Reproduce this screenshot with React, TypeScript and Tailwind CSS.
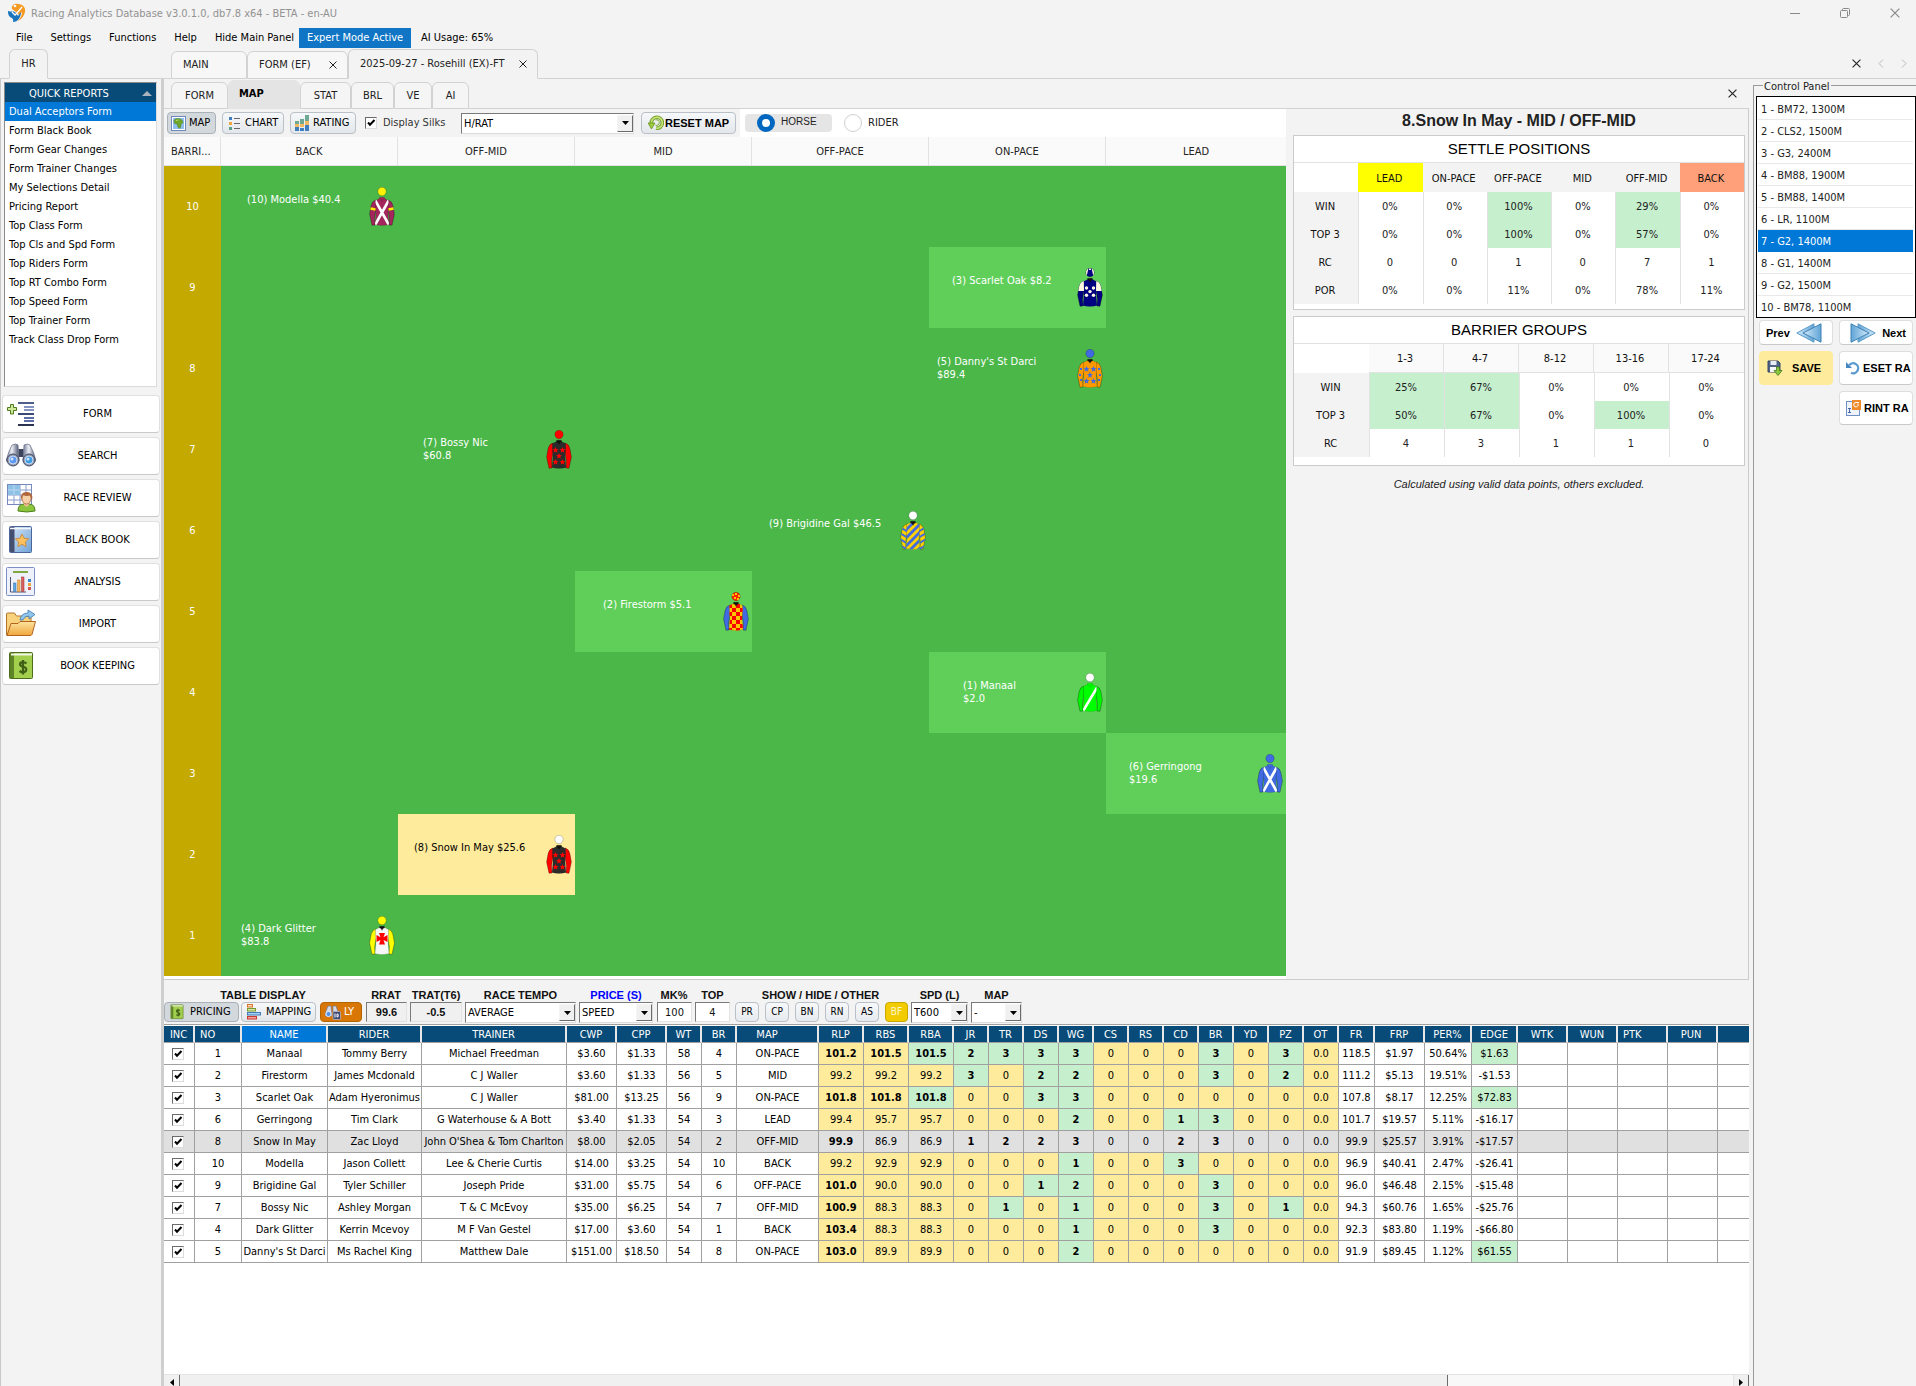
import React from "react";

/* ---------- Icons ---------- */

const LogoIcon = () => (
  <svg width="18" height="20" viewBox="0 0 18 20">
    <path d="M4 6C3 2 7 0 10 1c5 0 8 4 7 8-1 4-3 7-7 9 3-4 4-6 4-9l-3 3-3-3z" fill="#f59a23" />
    <path d="M0 8c3 1 5 0 7 1l3 4 3-4c0 5-3 10-8 10 1-3-1-4-3-5C0 12 0 10 0 8z" fill="#1b75bc" />
    <path d="M4 9l3 3 2-2 5-6" fill="none" stroke="#fff" strokeWidth="1.3" />
    <circle cx="7" cy="3" r="1.3" fill="#fff" />
  </svg>
);

const Cross = ({ size = 8, color = "#222" }: { size?: number; color?: string }) => (
  <svg width={size} height={size} viewBox="0 0 8 8">
    <path d="M.5.5l7 7M7.500.5l-7 7" stroke={color} strokeWidth="1" fill="none" />
  </svg>
);

const FormIcon = () => (
  <svg width="30" height="30" viewBox="0 0 30 30">
    <path d="M12 4h16" stroke="#4d5f8c" strokeWidth="2" />
    <path d="M18 8h10M18 11h10" stroke="#8495c2" strokeWidth="2" />
    <path d="M12 15h16" stroke="#3b4a75" strokeWidth="2" />
    <path d="M18 19h10M18 22h10" stroke="#5a6da6" strokeWidth="2" />
    <path d="M12 26h16" stroke="#2a3350" strokeWidth="2" />
    <path d="M4.500 5.500h3v3h3v3h-3v3.500h-3v-3.500h-3v-3h3z" fill="#cfe89a" stroke="#4e7a1f" />
  </svg>
);

const SearchIcon = () => (
  <svg width="30" height="30" viewBox="0 0 30 30">
    <defs>
      <linearGradient id="bino" x1="0" x2="1">
        <stop offset="0" stopColor="#6e7791" />
        <stop offset=".45" stopColor="#eef0f6" />
        <stop offset="1" stopColor="#4b536d" />
      </linearGradient>
    </defs>
    <rect x="12.500" y="8" width="5" height="8" fill="#3b435c" />
    <path d="M6 4q4-2 6 0l1 16H0Q3 9 6 4z" fill="url(#bino)" stroke="#646c86" strokeWidth=".7" />
    <path d="M18 4q4-2 6 0 4 7 6 16H17z" fill="url(#bino)" stroke="#646c86" strokeWidth=".7" />
    <circle cx="7" cy="19" r="6" fill="#8d95ad" stroke="#444c66" />
    <circle cx="7" cy="19" r="4" fill="#5b97ee" stroke="#e3ecfb" strokeWidth=".8" />
    <circle cx="23" cy="19" r="6" fill="#8d95ad" stroke="#444c66" />
    <circle cx="23" cy="19" r="4" fill="#3f9de0" stroke="#e3ecfb" strokeWidth=".8" />
    <circle cx="6" cy="18" r="1.500" fill="#cfe3ff" />
    <circle cx="22" cy="18" r="1.500" fill="#cfe3ff" />
  </svg>
);

const ReviewIcon = () => (
  <svg width="30" height="30" viewBox="0 0 30 30">
    <rect x="1.500" y="1.500" width="24" height="20" fill="#fff" stroke="#7589bd" />
    <path d="M8 2v19M14 2v19M20 2v19M2 7h23M2 12h23M2 17h23" stroke="#8b9ccb" />
    <rect x="2" y="2" width="12" height="10" fill="#8fc1e6" />
    <path d="M8 2v10M2 7h12" stroke="#b9d9f0" />
    <path d="M12 28q0-7 6-7h5q6 0 6 7-8 2-17 0z" fill="#8cc63f" stroke="#4e7f1c" />
    <path d="M18 19h5v3l-2.500 2-2.500-2z" fill="#eebf93" />
    <ellipse cx="20.500" cy="15.500" rx="4.500" ry="5.500" fill="#f5d0a8" stroke="#a8653a" strokeWidth=".8" />
    <path d="M15 17q-1-8 5.500-8 7 0 5.500 8l-2-4.500q-4 1-7-.5z" fill="#b0643a" />
  </svg>
);

const BlackBookIcon = () => (
  <svg width="30" height="30" viewBox="0 0 30 30">
    <defs>
      <linearGradient id="bb" x1="0" y1="0" x2="1" y2="1">
        <stop offset="0" stopColor="#d9e7f7" />
        <stop offset="1" stopColor="#6fa3d8" />
      </linearGradient>
    </defs>
    <rect x="3.500" y="1.500" width="22" height="26" rx="1" fill="url(#bb)" stroke="#4c6699" />
    <rect x="4" y="2" width="4.500" height="25" fill="#454f70" />
    <path d="M4 3.500h21" stroke="#f2f6fc" strokeWidth="1.500" />
    <path d="M16 9l2 4.200 4.700.6-3.400 3.200.9 4.600-4.200-2.300-4.200 2.300.9-4.600-3.400-3.200 4.700-.6z" fill="#fcc05f" stroke="#c98432" strokeWidth=".8" />
  </svg>
);

const AnalysisIcon = () => (
  <svg width="30" height="30" viewBox="0 0 30 30">
    <rect x="0.500" y="0.500" width="28" height="28" rx="1" fill="#eef1f9" stroke="#7c8fc4" />
    <path d="M7 5h15" stroke="#7fa93f" strokeWidth="2" />
    <path d="M4.500 10v15H20" stroke="#4a5675" fill="none" />
    <rect x="7.500" y="16" width="2.500" height="8.500" fill="#5fa7e0" stroke="#2f6aa8" strokeWidth=".5" />
    <rect x="11.500" y="13" width="2.500" height="11.500" fill="#f4b661" stroke="#c47f22" strokeWidth=".5" />
    <rect x="15.500" y="10" width="2.500" height="14.500" fill="#d9605c" stroke="#9c2f2c" strokeWidth=".5" />
    <rect x="22" y="12" width="3" height="3" fill="#3d85c6" />
    <rect x="22" y="16" width="3" height="3" fill="#f0a23c" />
    <rect x="22" y="20" width="3" height="3" fill="#cf5450" />
  </svg>
);

const ImportIcon = () => (
  <svg width="30" height="30" viewBox="0 0 30 30">
    <defs>
      <linearGradient id="fold" x1="0" y1="0" x2="0" y2="1">
        <stop offset="0" stopColor="#fde3a0" />
        <stop offset="1" stopColor="#f0a63c" />
      </linearGradient>
    </defs>
    <path d="M.5 26V5q0-1 1-1h7l2 3h13q1.500 0 1.500 1.500V13z" fill="#f8d27c" stroke="#b3742a" />
    <path d="M1 26.500L5 14.500h7l2-2h15.500L26 25.500q-.5 1-2 1z" fill="url(#fold)" stroke="#b3641c" />
    <path d="M14 11q1-7 8-7V1l7 4.500-6 4.500V7q-5 0-6 4z" fill="#8fc6ee" stroke="#3f78ae" strokeWidth=".8" />
  </svg>
);

const MoneyBookIcon = ({ size = 30 }: { size?: number }) => (
  <svg width={size} height={size} viewBox="0 0 30 30">
    <rect x="3.500" y="1.500" width="23" height="26" rx="1" fill="#a3cf4e" stroke="#4c6b1b" />
    <rect x="4" y="2" width="4" height="25" fill="#5f8427" />
    <path d="M5 3.500h21" stroke="#eef5e0" strokeWidth="2" />
    <path d="M20.500 12.500q-3-2.500-6-.8-1.500 2.800 1.800 3.800 5 1 3.800 4.200-2.600 3-6.600.3M17 9v14.500" fill="none" stroke="#3f5f16" strokeWidth="2.200" />
  </svg>
);

const MapIcon = () => (
  <svg width="15" height="15" viewBox="0 0 15 15">
    <rect x=".5" y=".5" width="14" height="14" fill="#fff" stroke="#6f89bd" />
    <rect x="2" y="2" width="11" height="11" fill="#8fbfee" />
    <path d="M3 4.500q1-2 3.500-2T11 4l1 2.500-2 2-.5 3-1.500 1-1.500-2.500V8H4.500q-2-1.500-1.500-3.500z" fill="#6fa62c" stroke="#4c7d1c" strokeWidth=".5" />
    <path d="M5 4.500l2.500-.5" stroke="#b5dd6a" />
  </svg>
);

const ListIcon = () => (
  <svg width="12" height="13" viewBox="0 0 12 13">
    <rect x="0" y="0" width="3" height="3" fill="#3f7fbf" />
    <rect x="0" y="5" width="3" height="3" fill="#f0a83c" />
    <rect x="0" y="10" width="3" height="3" fill="#5a9f87" />
    <path d="M5 1.500h6M5 6.500h6M5 11.500h6" stroke="#666" />
  </svg>
);

const RatingIcon = () => (
  <svg width="15" height="16" viewBox="0 0 15 16">
    <path d="M0 12h4v4H0zM5 13h4v3H5zM10 10h4v6h-4z" fill="#3f7fbf" />
    <path d="M0 9h4v3H0zM5 9h4v3H5zM10 6h4v4h-4z" fill="#f3b95f" />
    <path d="M0 6h4v3H0zM5 4h4v5H5zM10 0h4v6h-4z" fill="#6fa893" />
  </svg>
);

const ResetMapIcon = () => (
  <svg width="16" height="16" viewBox="0 0 16 16">
    <path d="M3.500 9A5.500 5.500 0 1 1 8 13.200" fill="none" stroke="#6f9c22" strokeWidth="3.600" />
    <path d="M3.500 9A5.500 5.500 0 1 1 8 13.200" fill="none" stroke="#c3e27a" strokeWidth="1.800" />
    <path d="M7.500 5a2.800 2.800 0 1 1 0 5.200" fill="none" stroke="#77a52b" />
    <path d="M0 8h7l-3.500 6z" fill="#9ecb3e" stroke="#5f8a1b" strokeWidth=".7" />
  </svg>
);

const MappingIcon = () => (
  <svg width="14" height="16" viewBox="0 0 14 16">
    <rect x=".5" y=".5" width="5" height="2.500" fill="#fbe2b8" stroke="#d9742c" />
    <rect x=".5" y="4.500" width="8" height="2.500" fill="#d5e8a5" stroke="#7a9a2e" />
    <rect x=".5" y="8.500" width="13" height="2.500" fill="#a7d0f2" stroke="#3f7db8" />
    <rect x=".5" y="12.500" width="9" height="2.500" fill="#f3a39c" stroke="#c8392f" />
  </svg>
);

const BinoIdIcon = () => (
  <svg width="16" height="15" viewBox="0 0 16 15">
    <path d="M3 1h3l1 10H0q1-6 3-10zM8 1h3l2 6H8z" fill="#d5d9e6" stroke="#69728f" strokeWidth=".6" />
    <circle cx="3.500" cy="9" r="2.600" fill="#4d95e6" stroke="#eef" />
    <rect x="8" y="6.500" width="7.500" height="8" rx="1" fill="#3c4a75" stroke="#c9cfe2" strokeWidth=".6" />
    <path d="M10 8.500v4M12 9v3h.8q1.200-1.500 0-3z" stroke="#fff" fill="none" />
  </svg>
);

const DoubleArrow = ({ flip = false }: { flip?: boolean }) => (
  <svg width="26" height="20" viewBox="0 0 26 20" className={`shrink-0 ${flip ? "rotate-180" : ""}`}>
    <defs>
      <linearGradient id="da" x1="0" y1="0" x2="1" y2="0">
        <stop offset="0" stopColor="#d3ebfa" />
        <stop offset="1" stopColor="#5fa4d6" />
      </linearGradient>
    </defs>
    <path d="M.8 10L18 .8v18.400z" fill="url(#da)" stroke="#5b9ac8" />
    <path d="M7 10L25 .8v18.400z" fill="url(#da)" stroke="#3f80b3" />
  </svg>
);

const SaveIcon = () => (
  <svg width="16" height="16" viewBox="0 0 16 16">
    <path d="M1 1h10l2 2v9H1z" fill="#4f6185" stroke="#37476b" />
    <rect x="3.500" y="1" width="6" height="4" fill="#e6ebf5" />
    <rect x="3" y="7" width="8" height="5" fill="#f4f6fa" />
    <path d="M9.500 7h3v3.500H15L11 15.500 7 10.500h2.500z" fill="#8cc63f" stroke="#447a1c" strokeWidth=".8" />
  </svg>
);

const UndoIcon = () => (
  <svg width="14" height="14" viewBox="0 0 14 14">
    <path d="M3.200 4.200A5 5 0 1 1 5 11.800" fill="none" stroke="#5b9ad0" strokeWidth="2.300" />
    <path d="M0 1v6h6z" fill="#4886bf" />
  </svg>
);

const PrintIcon = () => (
  <svg width="15" height="16" viewBox="0 0 15 16">
    <rect x=".5" y="1.500" width="13" height="14" fill="#eef3fb" stroke="#6f8fc7" />
    <rect x="6" y="0" width="9" height="10" fill="#ef8a2b" />
    <path d="M13 2.500h-3a2.200 2.200 0 1 0 1.800 1" fill="none" stroke="#fff" />
    <path d="M2 8.500h3M2 12.500h3M3.500 8.500v4" stroke="#4668a8" fill="none" />
  </svg>
);

/* ---------- Jockey silks ---------- */

const TORSO = "M6.500 13.500L10.500 11.500h5L19.500 13.500 19.500 20 19 27 20 37.500q-7 2-14 0L7 27 6.500 20z";
const SLEEVE_L = "M6.800 13Q3 14 2 19L.6 27 3 38.300 6 38 5.600 31 7 22z";
const SLEEVE_R = "M19.200 13Q23 14 24 19l1.400 8L23 38.300 20 38l.4-7L19 22z";
const STAR = "M0-3L.9-.9 3-.8 1.300.6 1.900 2.800 0 1.500-1.900 2.800-1.300.6-3-.8-.9-.9z";
const STAR_SPOTS = [[9.500, 20], [16.500, 20], [13, 26], [9.500, 32], [16.500, 32]];

type SilkDef = { cap: string; body: string; sleeve: string; art?: string; mark?: string };

const Silk = ({ id, def }: { id: string; def: SilkDef }) => {
  const { cap, body, sleeve, art, mark } = def;
  return (
    <svg width="26" height="39" viewBox="0 0 26 39" className="shrink-0">
      <defs>
        <clipPath id={`t${id}`}><path d={TORSO} /></clipPath>
        <clipPath id={`l${id}`}><path d={SLEEVE_L} /></clipPath>
        <clipPath id={`r${id}`}><path d={SLEEVE_R} /></clipPath>
        <clipPath id={`c${id}`}><circle cx="13" cy="4.500" r="4" /></clipPath>
      </defs>
      <path d={SLEEVE_L} fill={sleeve} stroke="#0006" strokeWidth=".7" />
      <path d={SLEEVE_R} fill={sleeve} stroke="#0006" strokeWidth=".7" />
      <path d={TORSO} fill={body} stroke="#0003" strokeWidth=".5" />
      <circle cx="13" cy="4.500" r="4.200" fill={cap} stroke="#0005" strokeWidth=".6" />
      {art === "cross" && (
        <g clipPath={`url(#t${id})`}>
          <path d="M6 13L20 38M20 13L6 38" stroke={mark} strokeWidth="2.600" />
        </g>
      )}
      {art === "sash" && (
        <g clipPath={`url(#t${id})`}>
          <path d="M21 13L6 38" stroke={mark} strokeWidth="2.600" />
        </g>
      )}
      {art === "stars" &&
        STAR_SPOTS.map(([x, y], i) => <path key={i} d={STAR} fill={mark} transform={`translate(${x} ${y})`} />)}
      {art === "spots" && STAR_SPOTS.map(([x, y], i) => (
        <circle key={i} cx={x} cy={20 + (y - 20) * 0.6} r="1.700" fill={mark} />
      ))}
      {art === "maltese" && (
        <path d="M10 17h6l-1.500 4.200L18.500 19v7L14.500 24l1.500 4.500h-6L11.500 24l-4 2v-7l4 2.200z" fill={mark} />
      )}
      {art === "check" && (
        <g>
          <g clipPath={`url(#t${id})`}>
            {Array.from({ length: 28 }, (_, i) => {
              const r = Math.floor(i / 4);
              const c = i % 4;
              return (r + c) % 2 === 0 ? (
                <rect key={i} x={5 + c * 4} y={12 + r * 4} width="4" height="4" fill={mark} />
              ) : null;
            })}
          </g>
          <g clipPath={`url(#c${id})`} fill="#ffc600">
            <path d="M9 2h2v2H9zM12 1h2v2h-2zM15 3h2v2h-2zM11 5h2v2h-2zM14 6h2v2h-2z" />
          </g>
        </g>
      )}
      {art === "stripes" && (
        <g stroke={mark} strokeWidth="2.800" fill="none">
          <path clipPath={`url(#t${id})`} d="M2 23L20 5M2 31L24 9M2 39L26 15M8 41L28 21M16 41L28 29" />
          <path clipPath={`url(#l${id})`} strokeWidth="2" d="M0 16l8 5M0 22l8 5M0 28l8 5M0 34l8 5" />
          <path clipPath={`url(#r${id})`} strokeWidth="2" d="M26 16l-8 5M26 22l-8 5M26 28l-8 5M26 34l-8 5" />
        </g>
      )}
      {id === "10" && <path d="M1.500 21.500l5 1M24.500 21.500l-5 1" stroke="#ffef00" strokeWidth="2.500" />}
      {id === "3" && (
        <g>
          <path clipPath={`url(#l${id})`} d="M0 12h8v11H0z" fill="#fff7e0" />
          <path clipPath={`url(#r${id})`} d="M18 12h8v11h-8z" fill="#fff7e0" />
          <path clipPath={`url(#c${id})`} d="M8 0h3.500L9.500 9H8zM14.500 0H18v9h-1.500zM12 0h2v2h-2z" fill="#fff7e0" />
        </g>
      )}
      {id === "5" && <path d="M3 19h2v2H3zM2 25h2v2H2zM3 30h2v2H3zM21 19h2v2h-2zM22 25h2v2h-2zM21 30h2v2h-2z" fill={mark} />}
      <path d="M10.500 10.300h5v1.700L14 12.500l-1 2-1-2-1.500-.5z" fill={art === "cross" || art === "sash" ? body : "#111"} stroke="#0004" strokeWidth=".4" />
    </svg>
  );
};

/* ---------- Race map data ---------- */

type Runner = { no: number; text: string; price: string; wrap?: boolean; barrier: number; pos: number; tone?: string; pad: string; silk: SilkDef };

const RUNNERS: Runner[] = [
  { no: 10, text: "(10) Modella", price: "$40.4", barrier: 10, pos: 0, pad: "pl-[26px]", silk: { cap: "#fff200", body: "#a3265c", sleeve: "#a3265c", art: "cross", mark: "#fff" } },
  { no: 3, text: "(3) Scarlet Oak", price: "$8.2", barrier: 9, pos: 4, tone: "bg-[#60cf5a]", pad: "pl-[23px]", silk: { cap: "#000080", body: "#000080", sleeve: "#000080", art: "spots", mark: "#fff7e0" } },
  { no: 5, text: "(5) Danny's St Darci", price: "$89.4", wrap: true, barrier: 8, pos: 4, pad: "pl-[8px]", silk: { cap: "#4169e1", body: "#ff9900", sleeve: "#ff9900", art: "stars", mark: "#4169e1" } },
  { no: 7, text: "(7) Bossy Nic", price: "$60.8", wrap: true, barrier: 7, pos: 1, pad: "pl-[25px]", silk: { cap: "#ff0000", body: "#2b2b2b", sleeve: "#ff0000", art: "stars", mark: "#ff0000" } },
  { no: 9, text: "(9) Brigidine Gal", price: "$46.5", barrier: 6, pos: 3, pad: "pl-[17px]", silk: { cap: "#fff", body: "#ffd200", sleeve: "#ffd200", art: "stripes", mark: "#4169e1" } },
  { no: 2, text: "(2) Firestorm", price: "$5.1", barrier: 5, pos: 2, tone: "bg-[#60cf5a]", pad: "pl-[28px]", silk: { cap: "#ff2200", body: "#ffc600", sleeve: "#4169e1", art: "check", mark: "#ff0000" } },
  { no: 1, text: "(1) Manaal", price: "$2.0", wrap: true, barrier: 4, pos: 4, tone: "bg-[#60cf5a]", pad: "pl-[34px]", silk: { cap: "#fff", body: "#00ff00", sleeve: "#00f500", art: "sash", mark: "#fff" } },
  { no: 6, text: "(6) Gerringong", price: "$19.6", wrap: true, barrier: 3, pos: 5, tone: "bg-[#60cf5a]", pad: "pl-[23px]", silk: { cap: "#4169e1", body: "#4169e1", sleeve: "#4169e1", art: "cross", mark: "#fff" } },
  { no: 8, text: "(8) Snow In May", price: "$25.6", barrier: 2, pos: 1, tone: "bg-[#ffeb9c] text-black", pad: "pl-[16px]", silk: { cap: "#fff", body: "#2b2b2b", sleeve: "#ff0000", art: "stars", mark: "#ff0000" } },
  { no: 4, text: "(4) Dark Glitter", price: "$83.8", wrap: true, barrier: 1, pos: 0, pad: "pl-[20px]", silk: { cap: "#ffff00", body: "#f7f7f7", sleeve: "#ffff00", art: "maltese", mark: "#ff0000" } },
];

const POSITIONS = ["BACK", "OFF-MID", "MID", "OFF-PACE", "ON-PACE", "LEAD"];
const MAP_GRID = "grid grid-cols-[57px_177fr_177fr_177fr_177fr_177fr_180fr]";

/* ---------- Shared controls ---------- */

const Select = ({ value, label, className = "" }: { value: string; label: string; className?: string }) => (
  <span className={`relative block h-[21px] bg-white border border-t-[#7a7a7a] border-l-[#7a7a7a] border-r-[#dcdcdc] border-b-[#dcdcdc] ${className}`}>
    <select aria-label={label} defaultValue={value} className="block h-full w-full appearance-none bg-transparent pl-[2px] text-[11px] leading-[19px] text-black outline-none">
      <option>{value}</option>
    </select>
    <span className="pointer-events-none absolute right-0 top-px bottom-px flex w-4 items-center justify-center border border-t-[#f4f4f4] border-l-[#f4f4f4] border-r-[#6b6b6b] border-b-[#6b6b6b] bg-[#f0f0f0]">
      <svg width="7" height="4" viewBox="0 0 7 4"><path d="M0 0h7L3.500 4z" fill="#000" /></svg>
    </span>
  </span>
);

const Tick = ({ label }: { label: string }) => (
  <span className="relative inline-block h-3 w-3 align-top">
    <input type="checkbox" defaultChecked aria-label={label} className="block h-3 w-3 appearance-none border border-t-[#6b6b6b] border-l-[#6b6b6b] border-r-[#dcdcdc] border-b-[#dcdcdc] bg-white" />
    <svg className="pointer-events-none absolute left-0 top-0" width="12" height="12" viewBox="0 0 12 12">
      <path d="M3 5.500l2 2.200L9.500 3" stroke="#000" strokeWidth="2" fill="none" />
    </svg>
  </span>
);

const TOOL_BTN = "flex h-[22px] items-center rounded-sm border border-[#b9c0c7] bg-linear-to-b from-[#f6f8fa] to-[#e3e7eb] text-black";
const TOOL_BTN_ON = "flex h-[22px] items-center rounded-sm border border-[#a9b1b9] bg-[#d3d8dd] text-black";

/* ---------- Header ---------- */

const TitleBar = () => (
  <header className="flex h-[26px] shrink-0 items-center pl-2">
    <LogoIcon />
    <span className="ml-[5px] flex-1 pt-px text-[#929292]">Racing Analytics Database v3.0.1.0, db7.8 x64 - BETA - en-AU</span>
    <div className="flex items-center gap-10 pr-4">
      <button aria-label="Minimize" className="flex w-[10px] justify-center"><svg width="10" height="10"><path d="M0 5.500h10" stroke="#8a8a8a" /></svg></button>
      <button aria-label="Restore" className="flex w-[10px] justify-center">
        <svg width="10" height="10" viewBox="0 0 10 10" fill="none" stroke="#8a8a8a"><rect x=".5" y="2.500" width="7" height="7" rx="1" /><path d="M2.500 2.500v-1q0-1 1-1h5q1 0 1 1v5q0 1-1 1H8" /></svg>
      </button>
      <button aria-label="Close" className="flex w-[10px] justify-center"><Cross size={10} color="#8a8a8a" /></button>
    </div>
  </header>
);

const MenuBar = () => (
  <nav className="flex h-[22px] shrink-0 items-center pl-4 pt-px text-black">
    <button>File</button>
    <button className="ml-[18px]">Settings</button>
    <button className="ml-[18px]">Functions</button>
    <button className="ml-[18px]">Help</button>
    <button className="ml-[18px]">Hide Main Panel</button>
    <button className="ml-[5px] h-5 w-28 bg-[#0f75c4] text-center text-white">Expert Mode Active</button>
    <button className="ml-[10px]">AI Usage: 65%</button>
  </nav>
);

const TAB = "flex h-7 items-center rounded-t-md border border-[#d2d2d2] bg-[#f7f7f7] text-[#222]";
const TAB_ON = "flex h-[30px] items-center rounded-t-md border border-[#d2d2d2] border-b-transparent bg-[#f3f3f3] text-[#222]";
const FILL = "self-stretch border-b border-[#d2d2d2]";

const TopTabs = () => (
  <div className="flex h-[31px] shrink-0 items-end" role="tablist">
    <div className={`${FILL} w-[9px]`} />
    <button role="tab" className={`${TAB_ON} w-[39px] justify-center`}>HR</button>
    <div className={`${FILL} w-[123px]`} />
    <button role="tab" className={`${TAB} w-[76px] pl-[11px]`}>MAIN</button>
    <button role="tab" className={`${TAB} w-[101px] justify-between pl-[11px] pr-[10px]`}>FORM (EF)<Cross /></button>
    <button role="tab" aria-selected="true" className={`${TAB_ON} w-[190px] justify-between pl-[11px] pr-[10px]`}>2025-09-27 - Rosehill (EX)-FT<Cross /></button>
    <div className={`${FILL} flex flex-1 items-center justify-end gap-[17px] pr-[9px]`}>
      <button aria-label="Close tab"><Cross size={9} /></button>
      <button aria-label="Previous tabs"><svg width="6" height="9" viewBox="0 0 6 9"><path d="M5 .5L1 4.500l4 4" stroke="#bbb" fill="none" /></svg></button>
      <button aria-label="Next tabs"><svg width="6" height="9" viewBox="0 0 6 9"><path d="M1 .5l4 4-4 4" stroke="#bbb" fill="none" /></svg></button>
    </div>
  </div>
);

/* ---------- Left panel ---------- */

const REPORTS = ["Dual Acceptors Form", "Form Black Book", "Form Gear Changes", "Form Trainer Changes", "My Selections Detail", "Pricing Report", "Top Class Form", "Top Cls and Spd Form", "Top Riders Form", "Top RT Combo Form", "Top Speed Form", "Top Trainer Form", "Track Class Drop Form"];

const NAV = [
  { label: "FORM", icon: <FormIcon /> },
  { label: "SEARCH", icon: <SearchIcon /> },
  { label: "RACE REVIEW", icon: <ReviewIcon /> },
  { label: "BLACK BOOK", icon: <BlackBookIcon /> },
  { label: "ANALYSIS", icon: <AnalysisIcon /> },
  { label: "IMPORT", icon: <ImportIcon /> },
  { label: "BOOK KEEPING", icon: <MoneyBookIcon /> },
];

const LeftPanel = () => (
  <aside className="flex w-[164px] shrink-0 flex-col border-l border-r-[3px] border-l-[#c8c8c8] border-r-[#cfcfcf] pt-[3px]">
    <div className="ml-[3px] mr-1 flex h-[305px] flex-col border border-l-[#8a8a8a] border-t-[#8a8a8a] border-b-[#dcdcdc] border-r-[#dcdcdc] bg-white">
      <div className="flex h-[19px] items-center justify-between bg-[#084b78] pl-6 pr-1 pt-[2px] text-white">
        <span>QUICK REPORTS</span>
        <svg width="10" height="5" viewBox="0 0 10 5"><path d="M5 0l5 5H0z" fill="#a9b4bd" /></svg>
      </div>
      <ul>
        {REPORTS.map((r, i) => (
          <li key={r} className={i === 0 ? "bg-[#0078d7] text-white" : "text-black"}>
            <button className="block h-[19px] w-full pl-1 text-left">{r}</button>
          </li>
        ))}
      </ul>
    </div>
    <div className="mt-2 flex flex-col gap-1 px-px">
      {NAV.map((n) => (
        <button key={n.label} className="flex h-[38px] items-center rounded border border-[#e0e0e0] border-b-[#c9c9c9] bg-white pl-[3px] text-black">
          {n.icon}
          <span className="flex-1 text-center">{n.label}</span>
        </button>
      ))}
    </div>
  </aside>
);

/* ---------- Map panel ---------- */

const ITAB = "flex h-[27px] items-center justify-center rounded-t-md border border-[#d2d2d2] bg-[#f5f5f5] text-[#222]";

const InnerTabs = () => (
  <div className="flex h-[30px] shrink-0 items-end" role="tablist">
    <div className={`${FILL} w-[7px]`} />
    <button role="tab" className={`${ITAB} w-[57px]`}>FORM</button>
    <button role="tab" aria-selected="true" className="h-[29px] w-[72px] rounded-t-md bg-[#e4e4e4] pl-[11px] pb-[2px] text-left font-bold text-black">MAP</button>
    <button role="tab" className={`${ITAB} w-[51px]`}>STAT</button>
    <button role="tab" className={`${ITAB} w-[43px]`}>BRL</button>
    <button role="tab" className={`${ITAB} w-[38px]`}>VE</button>
    <button role="tab" className={`${ITAB} w-[37px]`}>AI</button>
    <div className={`${FILL} flex flex-1 items-center justify-end pr-3`}>
      <button aria-label="Close map"><Cross size={9} /></button>
    </div>
  </div>
);

const MapToolbar = () => (
  <div className="flex h-7 shrink-0 bg-white">
    <div className="flex items-center bg-[#f3f3f3] pl-[3px] pr-1">
      <button className={`${TOOL_BTN_ON} w-[49px] gap-[3px] pl-[3px]`}><MapIcon />MAP</button>
      <button className={`${TOOL_BTN} ml-[6px] w-[62px] gap-1 pl-[6px]`}><ListIcon />CHART</button>
      <button className={`${TOOL_BTN} ml-[6px] w-[66px] gap-[3px] pl-1`}><RatingIcon />RATING</button>
      <span className="ml-[9px] flex h-3"><Tick label="Display Silks" /></span>
      <span className="ml-[6px] w-[66px] text-[#333]">Display Silks</span>
      <Select value="H/RAT" label="Rating type" className="ml-3 w-[173px]" />
      <button className={`${TOOL_BTN} ml-[7px] w-[95px] gap-px pl-[6px] font-['Liberation_Sans',sans-serif] font-bold`}><ResetMapIcon />RESET MAP</button>
    </div>
    <div className="flex items-center">
      <label className="ml-[5px] flex h-[18px] w-[87px] items-center rounded bg-[#e5e5e5] pl-3">
        <input type="radio" name="who" defaultChecked className="h-[18px] w-[18px] shrink-0 appearance-none rounded-full border-[5px] border-[#0067c0] bg-white" />
        <span className="ml-[6px] pb-[2px] font-['Liberation_Sans',sans-serif] text-[10px] text-[#222]">HORSE</span>
      </label>
      <label className="ml-3 flex items-center">
        <input type="radio" name="who" className="h-[18px] w-[18px] shrink-0 appearance-none rounded-full border border-[#cfcfcf] bg-white" />
        <span className="ml-[6px] text-[#222]">RIDER</span>
      </label>
    </div>
  </div>
);

const RaceMap = () => (
  <section className="flex min-w-0 flex-1 flex-col bg-white pb-[3px]">
    <MapToolbar />
    <div className={`${MAP_GRID} h-[29px] border-b border-[#e2e2e2] bg-[#fafafa] text-[#222]`}>
      <div className="flex items-center border-r border-[#e2e2e2] pl-[7px] pt-[2px]">BARRI...</div>
      {POSITIONS.map((p) => (
        <div key={p} className="flex items-center justify-center border-r border-[#e2e2e2] pt-[2px] last:border-r-0">{p}</div>
      ))}
    </div>
    {RUNNERS.map((r) => (
      <div key={r.no} className={`${MAP_GRID} h-[81px] bg-[#4bb749] text-white`}>
        <div className="flex items-center justify-center bg-[#c4a900]">{r.barrier}</div>
        {POSITIONS.map((p, i) =>
          i === r.pos ? (
            <div key={p} className={`flex items-center justify-between pb-px pr-[3px] ${r.pad} ${r.tone ?? ""}`}>
              <div className={`leading-[13px] ${r.wrap ? "" : "pb-[13px]"}`}>
                {r.text}{r.wrap ? <br /> : " "}{r.price}
              </div>
              <Silk id={String(r.no)} def={r.silk} />
            </div>
          ) : (
            <div key={p} />
          ),
        )}
      </div>
    ))}
  </section>
);

/* ---------- Statistics ---------- */

type Cell = string;
const isGood = (row: string, v: Cell) => (row === "WIN" || row === "TOP 3") && v !== "0%";

const SETTLE: [string, Cell[]][] = [
  ["WIN", ["0%", "0%", "100%", "0%", "29%", "0%"]],
  ["TOP 3", ["0%", "0%", "100%", "0%", "57%", "0%"]],
  ["RC", ["0", "0", "1", "0", "7", "1"]],
  ["POR", ["0%", "0%", "11%", "0%", "78%", "11%"]],
];
const BARRIER: [string, Cell[]][] = [
  ["WIN", ["25%", "67%", "0%", "0%", "0%"]],
  ["TOP 3", ["50%", "67%", "0%", "100%", "0%"]],
  ["RC", ["4", "3", "1", "1", "0"]],
];

const StatTable = ({ title, heads, rows, headTone, pad }: { title: string; heads: string[]; rows: [string, Cell[]][]; headTone: (h: string) => string; pad: string }) => (
  <div className={`border border-[#cbcbcb] bg-white ${pad}`}>
    <h3 className="h-[27px] border-b border-[#e2e2e2] text-center font-['Liberation_Sans',sans-serif] text-[15px] leading-[26px] text-black">{title}</h3>
    <table className="w-full table-fixed border-separate border-spacing-0 text-center">
      <thead>
        <tr className="h-[29px]">
          <td />
          {heads.map((h) => <th key={h} className={`p-0 pr-[2px] pt-[2px] font-normal text-[#111] ${headTone(h)}`}>{h}</th>)}
        </tr>
      </thead>
      <tbody>
        {rows.map(([name, cells]) => (
          <tr key={name} className="h-7">
            <th className="bg-[#f3f3f3] p-0 pr-[2px] pt-px font-normal text-[#111]">{name}</th>
            {cells.map((c, i) => (
              <td key={i} className={`border-l border-[#e2e2e2] p-0 pr-[2px] pt-px text-[#222] ${isGood(name, c) ? "bg-[#c6efce]" : ""}`}>{c}</td>
            ))}
          </tr>
        ))}
      </tbody>
    </table>
  </div>
);

const Stats = () => (
  <section className="w-[463px] shrink-0 border-r border-[#cbcbcb] pl-[7px] pr-[3px]">
    <h2 className="h-[26px] text-center font-['Liberation_Sans',sans-serif] text-base font-bold leading-[24px] text-[#222]">8.Snow In May - MID / OFF-MID</h2>
    <StatTable
      title="SETTLE POSITIONS"
      heads={["LEAD", "ON-PACE", "OFF-PACE", "MID", "OFF-MID", "BACK"]}
      rows={SETTLE}
      headTone={(h) => (h === "LEAD" ? "bg-[#ffff00]" : h === "BACK" ? "bg-[#ffa07a]" : "bg-[#f3f3f3]")}
      pad="pb-[5px]"
    />
    <div className="h-[6px]" />
    <StatTable
      title="BARRIER GROUPS"
      heads={["1-3", "4-7", "8-12", "13-16", "17-24"]}
      rows={BARRIER}
      headTone={() => "bg-[#fafafa] border-b border-r border-[#e2e2e2] last:border-r-0"}
      pad="pb-2"
    />
    <p className="mt-[11px] text-center font-['Liberation_Sans',sans-serif] italic text-[#222]">Calculated using valid data points, others excluded.</p>
  </section>
);

/* ---------- Bottom toolbar ---------- */

const Group = ({ label, tone = "text-[#111]", children }: { label: string; tone?: string; children: React.ReactNode }) => (
  <div className="flex flex-col items-center">
    <span className={`h-[14px] whitespace-nowrap font-['Liberation_Sans',sans-serif] font-bold leading-[14px] ${tone}`}>{label}</span>
    <div className="flex">{children}</div>
  </div>
);

const Field = ({ label, value, className }: { label: string; value: string; className: string }) => (
  <input aria-label={label} defaultValue={value} className={`h-5 border border-t-[#7a7a7a] border-l-[#7a7a7a] border-r-[#e3e3e3] border-b-[#e3e3e3] text-center text-[11px] text-[#111] outline-none ${className}`} />
);

const Flag = ({ children }: { children: string }) => (
  <button className="h-5 w-6 rounded-sm border border-[#b9c0c7] bg-linear-to-b from-[#f8f9fb] to-[#e6eaee] text-[10px] text-black">{children}</button>
);

const BottomToolbar = () => (
  <div className="flex h-[45px] shrink-0 items-start gap-[3px] border-b border-[#a0a0a0] pt-2">
    <Group label="TABLE DISPLAY">
      <button className="flex h-5 w-[75px] items-center gap-[5px] rounded-sm border border-[#a9b1b9] bg-[#d3d8dd] pl-1 text-black"><MoneyBookIcon size={16} />PRICING</button>
      <button className="ml-[2px] flex h-5 w-[75px] items-center gap-[5px] rounded-sm border border-[#b9c0c7] bg-linear-to-b from-[#f6f8fa] to-[#e3e7eb] pl-[5px] text-black"><MappingIcon />MAPPING</button>
      <button className="ml-1 flex h-5 w-[42px] items-center gap-[3px] rounded-sm border border-[#b36500] bg-[#d97706] pl-1 text-white"><BinoIdIcon />LY</button>
    </Group>
    <Group label="RRAT"><Field label="RRAT" value="99.6" className="ml-px w-[41px] bg-[#f0f0f0] font-['Liberation_Sans',sans-serif] font-bold" /></Group>
    <Group label="TRAT(T6)"><Field label="TRAT(T6)" value="-0.5" className="w-[52px] bg-[#f0f0f0] font-['Liberation_Sans',sans-serif] font-bold" /></Group>
    <Group label="RACE TEMPO"><Select value="AVERAGE" label="Race tempo" className="w-[111px]" /></Group>
    <Group label="PRICE (S)" tone="text-[#0000ff]"><Select value="SPEED" label="Price" className="w-[74px]" /></Group>
    <Group label="MK%"><Field label="MK%" value="100" className="ml-px w-[35px] bg-white" /></Group>
    <Group label="TOP"><Field label="TOP" value="4" className="w-[35px] bg-white" /></Group>
    <Group label="SHOW / HIDE / OTHER">
      <div className="flex gap-[6px] pl-[2px]">
        {["PR", "CP", "BN", "RN", "AS"].map((f) => <Flag key={f}>{f}</Flag>)}
        <button className="h-5 w-[23px] rounded-sm border border-[#c9a800] bg-[#f2cc00] text-[10px] text-[#fff6cc]">BF</button>
      </div>
    </Group>
    <Group label="SPD (L)"><Select value="T600" label="Speed" className="w-[57px]" /></Group>
    <Group label="MAP"><Select value="-" label="Map" className="w-[51px]" /></Group>
  </div>
);

/* ---------- Runner table ---------- */

const COLS: [string, string][] = [
  ["INC", "w-[31px]"], ["NO", "w-[47px]"], ["NAME", "w-[86px]"], ["RIDER", "w-[94px]"], ["TRAINER", "w-[145px]"],
  ["CWP", "w-[50px]"], ["CPP", "w-[50px]"], ["WT", "w-[35px]"], ["BR", "w-[35px]"], ["MAP", "w-[82px]"],
  ["RLP", "w-[45px]"], ["RBS", "w-[45px]"], ["RBA", "w-[45px]"],
  ["JR", "w-[35px]"], ["TR", "w-[35px]"], ["DS", "w-[35px]"], ["WG", "w-[35px]"], ["CS", "w-[35px]"], ["RS", "w-[35px]"],
  ["CD", "w-[35px]"], ["BR", "w-[35px]"], ["YD", "w-[35px]"], ["PZ", "w-[35px]"], ["OT", "w-[35px]"],
  ["FR", "w-[36px]"], ["FRP", "w-[50px]"], ["PER%", "w-[47px]"], ["EDGE", "w-[46px]"],
  ["WTK", "w-[50px]"], ["WUN", "w-[50px]"], ["PTK", "w-[50px]"], ["PUN", "w-[50px]"], ["", ""],
];

const ROWS: string[] = [
  "1|Manaal|Tommy Berry|Michael Freedman|$3.60|$1.33|58|4|ON-PACE|*101.2|*101.5|+101.5|2|3|3|3|0|0|0|3|0|3|0.0|118.5|$1.97|50.64%|$1.63",
  "2|Firestorm|James Mcdonald|C J Waller|$3.60|$1.33|56|5|MID|99.2|99.2|99.2|3|0|2|2|0|0|0|3|0|2|0.0|111.2|$5.13|19.51%|-$1.53",
  "3|Scarlet Oak|Adam Hyeronimus|C J Waller|$81.00|$13.25|56|9|ON-PACE|*101.8|*101.8|+101.8|0|0|3|3|0|0|0|0|0|0|0.0|107.8|$8.17|12.25%|$72.83",
  "6|Gerringong|Tim Clark|G Waterhouse & A Bott|$3.40|$1.33|54|3|LEAD|99.4|95.7|95.7|0|0|0|2|0|0|1|3|0|0|0.0|101.7|$19.57|5.11%|-$16.17",
  "8|Snow In May|Zac Lloyd|John O'Shea & Tom Charlton|$8.00|$2.05|54|2|OFF-MID|*99.9|86.9|86.9|1|2|2|3|0|0|2|3|0|0|0.0|99.9|$25.57|3.91%|-$17.57",
  "10|Modella|Jason Collett|Lee & Cherie Curtis|$14.00|$3.25|54|10|BACK|99.2|92.9|92.9|0|0|0|1|0|0|3|0|0|0|0.0|96.9|$40.41|2.47%|-$26.41",
  "9|Brigidine Gal|Tyler Schiller|Joseph Pride|$31.00|$5.75|54|6|OFF-PACE|*101.0|90.0|90.0|0|0|1|2|0|0|0|3|0|0|0.0|96.0|$46.48|2.15%|-$15.48",
  "7|Bossy Nic|Ashley Morgan|T & C McEvoy|$35.00|$6.25|54|7|OFF-MID|*100.9|88.3|88.3|0|1|0|1|0|0|0|3|0|1|0.0|94.3|$60.76|1.65%|-$25.76",
  "4|Dark Glitter|Kerrin Mcevoy|M F Van Gestel|$17.00|$3.60|54|1|BACK|*103.4|88.3|88.3|0|0|0|1|0|0|0|3|0|0|0.0|92.3|$83.80|1.19%|-$66.80",
  "5|Danny's St Darci|Ms Rachel King|Matthew Dale|$151.00|$18.50|54|8|ON-PACE|*103.0|89.9|89.9|0|0|0|2|0|0|0|0|0|0|0.0|91.9|$89.45|1.12%|$61.55",
];

const cellTone = (raw: string, i: number, selected: boolean) => {
  const counts = i >= 12 && i <= 21;
  const good = raw.startsWith("+") || (counts && raw !== "0") || (i === 26 && !raw.startsWith("-"));
  const bold = raw.startsWith("+") || raw.startsWith("*") || (counts && raw !== "0");
  const bg = selected ? "" : good ? "bg-[#c6efce]" : i >= 9 && i <= 22 ? "bg-[#ffeb9c]" : "";
  return `${bg} ${bold ? "font-bold" : ""}`;
};

const HEAD_ALIGN: Record<string, string> = { NO: "text-left pl-[5px]", PTK: "text-left pl-[5px]", MAP: "pr-5", PUN: "pr-[2px]" };

const RunnerTable = () => (
  <div className="flex min-h-[359px] flex-1 flex-col bg-white pt-px">
    <div className="min-w-0 flex-1 overflow-hidden">
      <table className="w-full table-fixed border-separate border-spacing-0 text-center whitespace-nowrap text-black">
        <colgroup>{COLS.map(([, w], i) => <col key={i} className={w} />)}</colgroup>
        <thead>
          <tr className="h-[17px]">
            {COLS.map(([h], i) => (
              <th key={i} className={`border-b border-b-[#a0a0a0] border-r-2 border-r-[#e8e8e8] p-0 pt-[2px] font-normal leading-[14px] text-white last:border-r-0 ${h === "NAME" ? "bg-[#0078d7]" : "bg-[#084b78]"} ${HEAD_ALIGN[h] ?? ""}`}>{h}</th>
            ))}
          </tr>
        </thead>
        <tbody>
          {ROWS.map((line) => {
            const cells = line.split("|");
            const selected = cells[0] === "8";
            return (
              <tr key={line} className={`h-[22px] ${selected ? "bg-[#e0e0e0]" : ""}`}>
                <td className="border-b border-r border-[#a0a0a0] p-0 pr-[2px] leading-3"><Tick label={`Include ${cells[1]}`} /></td>
                {cells.map((c, i) => (
                  <td key={i} className={`border-b border-r border-[#a0a0a0] p-0 pt-px leading-4 ${cellTone(c, i, selected)}`}>{c.replace(/^[*+]/, "")}</td>
                ))}
                {[0, 1, 2, 3].map((i) => <td key={`e${i}`} className="border-b border-r border-[#a0a0a0] p-0" />)}
                <td className="border-b border-[#a0a0a0] p-0" />
              </tr>
            );
          })}
        </tbody>
      </table>
    </div>
    <div className="flex h-3 shrink-0 items-stretch border-t border-[#e3e3e3] bg-[#f8f8f8]">
      <button aria-label="Scroll left" className="flex w-4 items-center justify-center border-r border-[#6b6b6b] bg-[#f0f0f0] pt-1"><svg width="4" height="7" viewBox="0 0 4 7"><path d="M4 0v7L0 3.500z" /></svg></button>
      <div className="w-[80%] border-r border-[#6b6b6b] bg-[#f0f0f0]" />
      <div className="flex-1" />
      <button aria-label="Scroll right" className="flex w-4 items-center justify-center border-l border-r border-l-[#e3e3e3] border-r-[#6b6b6b] bg-[#f0f0f0] pt-1"><svg width="4" height="7" viewBox="0 0 4 7"><path d="M0 0v7l4-3.500z" /></svg></button>
    </div>
  </div>
);

/* ---------- Control panel ---------- */

const RACES = ["1 - BM72, 1300M", "2 - CLS2, 1500M", "3 - G3, 2400M", "4 - BM88, 1900M", "5 - BM88, 1400M", "6 - LR, 1100M", "7 - G2, 1400M", "8 - G1, 1400M", "9 - G2, 1500M", "10 - BM78, 1100M"];

const CBTN = "flex items-center overflow-hidden whitespace-nowrap rounded border font-['Liberation_Sans',sans-serif] font-bold text-black";
const CBTN_WHITE = "border-[#dedede] border-b-[#c9c9c9] bg-white";

const ControlPanel = () => (
  <aside className="flex w-[167px] shrink-0 flex-col pl-1 pt-[6px]">
    <div className="flex flex-1 flex-col border-l border-[#9a9a9a]">
      <div className="flex h-[11px] items-start">
        <span className="w-[9px] border-t border-[#9a9a9a]" />
        <span className="-mt-[5px] px-px text-[#222]">Control Panel</span>
        <span className="flex-1 border-t border-[#9a9a9a]" />
      </div>
      <ul className="ml-[2px] border border-black bg-white pl-px pr-[2px] pt-px">
        {RACES.map((r, i) => (
          <li key={r} className={`border-b last:border-b-0 ${i === 6 ? "border-[#0078d7] bg-[#0078d7] text-white" : "border-[#e8e8e8] text-[#222]"}`}>
            <button className="block h-[21px] w-full pl-[3px] pt-[2px] text-left">{r}</button>
          </li>
        ))}
      </ul>
      <div className="grid grid-cols-2 gap-x-[6px] gap-y-[6px] pl-[5px] pr-[3px] pt-[2px]">
        <button className={`${CBTN} ${CBTN_WHITE} h-[25px] justify-between pl-[6px] pr-[10px]`}>Prev<DoubleArrow /></button>
        <button className={`${CBTN} ${CBTN_WHITE} h-[25px] justify-between pl-[10px] pr-[6px]`}><DoubleArrow flip />Next</button>
        <button className={`${CBTN} h-[34px] gap-[9px] border-[#ffeb9c] bg-[#ffeb9c] pl-[7px]`}><SaveIcon />SAVE</button>
        <button className={`${CBTN} ${CBTN_WHITE} h-[34px] gap-[3px] pl-[6px]`}><UndoIcon />ESET RA</button>
        <span />
        <button className={`${CBTN} ${CBTN_WHITE} h-[34px] gap-[3px] pl-[6px]`}><PrintIcon />RINT RA</button>
      </div>
    </div>
  </aside>
);

export default function App() {
  return (
    <div className="flex min-h-screen flex-col overflow-hidden bg-[#f3f3f3] font-['DejaVu_Sans_Condensed','DejaVu_Sans',sans-serif] text-[11px] leading-[14px]">
      <TitleBar />
      <MenuBar />
      <TopTabs />
      <main className="flex flex-1">
        <LeftPanel />
        <div className="flex min-w-0 flex-1 flex-col">
          <InnerTabs />
          <div className="flex shrink-0 border-b border-[#cbcbcb]">
            <RaceMap />
            <Stats />
          </div>
          <BottomToolbar />
          <RunnerTable />
        </div>
        <ControlPanel />
      </main>
    </div>
  );
}
